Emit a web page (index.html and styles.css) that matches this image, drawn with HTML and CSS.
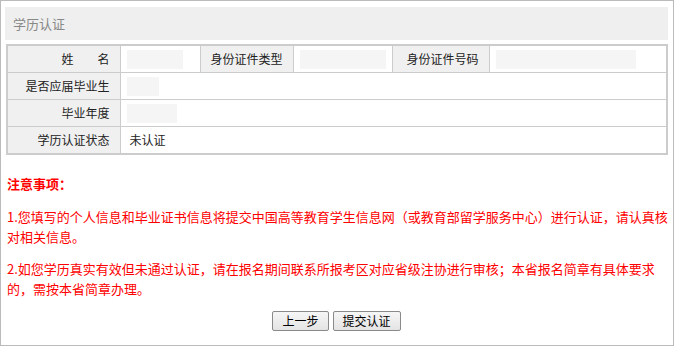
FILE: index.html
```html
<!DOCTYPE html>
<html lang="zh-CN">
  <head>
    <meta charset="UTF-8" />
    <meta name="viewport" content="width=device-width, initial-scale=1.0" />
    <link rel="stylesheet" href="styles.css">
  </head>
  <body>
    <div id="panel">
      <div class="panel-title">学历认证</div>

      <table id="info-table">
        <colgroup>
          <col class="c1" />
          <col class="c2" />
          <col class="c3" />
          <col class="c4" />
          <col class="c5" />
          <col />
        </colgroup>
        <tr>
          <td class="label">姓　　名</td>
          <td class="value"><span class="mask" style="width: 56px"></span></td>
          <td class="label">身份证件类型</td>
          <td class="value"><span class="mask" style="width: 86px"></span></td>
          <td class="label">身份证件号码</td>
          <td class="value"><span class="mask" style="width: 140px"></span></td>
        </tr>
        <tr>
          <td class="label">是否应届毕业生</td>
          <td class="value" colspan="5"><span class="mask" style="width: 32px"></span></td>
        </tr>
        <tr>
          <td class="label">毕业年度</td>
          <td class="value" colspan="5"><span class="mask" style="width: 50px"></span></td>
        </tr>
        <tr>
          <td class="label">学历认证状态</td>
          <td class="value" colspan="5">未认证</td>
        </tr>
      </table>

      <div class="notice">
        <p class="notice-title">注意事项：</p>
        <p>1.您填写的个人信息和毕业证书信息将提交中国高等教育学生信息网（或教育部留学服务中心）进行认证，请认真核对相关信息。</p>
        <p>2.如您学历真实有效但未通过认证，请在报名期间联系所报考区对应省级注协进行审核；本省报名简章有具体要求的，需按本省简章办理。</p>
      </div>

      <div class="actions">
        <button class="btn">上一步</button>
        <button class="btn">提交认证</button>
      </div>
    </div>
  </body>
</html>
```

FILE: styles.css
```css
body {
  font-family: "Noto Sans CJK SC", "Liberation Sans", sans-serif;
  margin: 0;
  padding: 0;
  background-color: #fff;
  color: #333;
}

#panel {
  width: 674px;
  height: 346px;
  box-sizing: border-box;
  border: 1px solid #bbb;
  padding: 6px 5px 0 4px;
}

.panel-title {
  height: 33px;
  line-height: 33px;
  background-color: #efefef;
  color: #888;
  font-size: 13px;
  padding-left: 8px;
}

#info-table {
  width: 662px;
  margin: 4px 0 0 1px;
  border-collapse: collapse;
  border: 2px solid #ccc;
  font-size: 12px;
  table-layout: fixed;
}

#info-table col.c1 { width: 113px; }
#info-table col.c2 { width: 80px; }
#info-table col.c3 { width: 93px; }
#info-table col.c4 { width: 99px; }
#info-table col.c5 { width: 97px; }

#info-table td {
  border: 1px solid #ccc;
  height: 26px;
  padding: 0;
  line-height: 16px;
}

#info-table td.label {
  background-color: #f0f0f0;
  text-align: right;
  padding-right: 10px;
  color: #222;
}

#info-table td.value {
  padding-left: 9px;
  color: #222;
}

.mask {
  display: inline-block;
  vertical-align: middle;
  height: 19px;
  margin-left: -3px;
  background-color: #f5f5f5;
}

.notice {
  color: #f00;
  font-size: 13px;
  line-height: 20px;
  margin-top: 19px;
  padding-left: 2px;
}

.notice p {
  margin: 0 0 12px 0;
}

.notice .notice-title {
  font-weight: bold;
  margin-bottom: 13px;
}

.actions {
  display: flex;
  justify-content: center;
  gap: 4px;
  margin-top: 1px;
}

.btn {
  font-family: "Noto Sans CJK SC", sans-serif;
  font-size: 12px;
  height: 20px;
  padding: 0 9px;
  line-height: 16px;
  color: #000;
  background: linear-gradient(#f6f6f6, #e4e4e4);
  border: 1px solid #8a8a8a;
  border-radius: 2px;
}
```
